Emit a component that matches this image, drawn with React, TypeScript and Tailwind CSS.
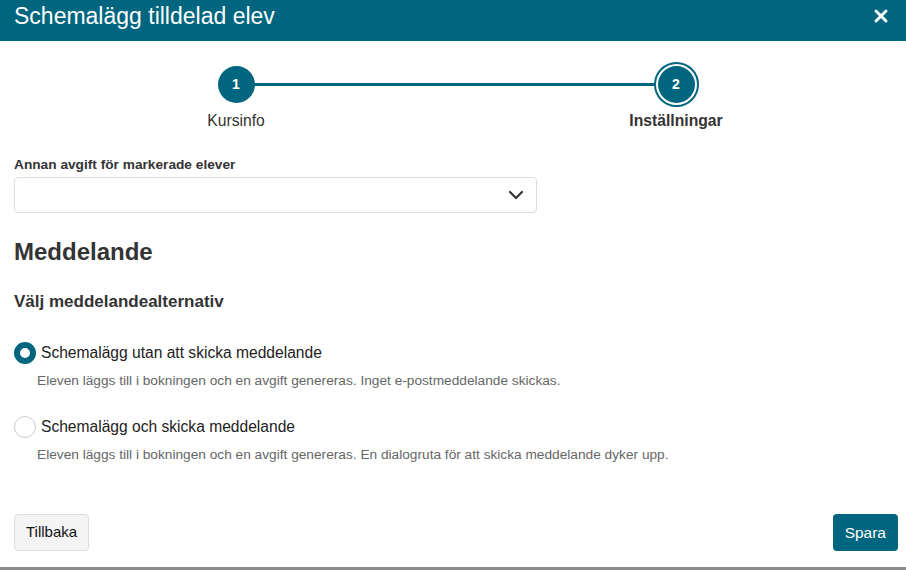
import { ChevronDown, X } from 'lucide-react';

const font = { fontFamily: '"Liberation Sans", Arial, sans-serif' };

function Stepper() {
  return (
    <div className="relative h-[96px] shrink-0">
      {/* linje mellan stegen */}
      <div className="absolute left-[252px] top-[42px] h-[3px] w-[406px] bg-[#00657e]" />
      <div className="absolute left-[196px] top-[25px] flex w-[80px] flex-col items-center">
        <div className="flex h-[37px] w-[37px] items-center justify-center rounded-full bg-[#00657e] text-[14px] font-bold text-white">
          1
        </div>
        <span className="mt-[9px] text-[15.7px] leading-[18px] text-[#333]">Kursinfo</span>
      </div>
      <div className="absolute left-[616px] top-[21px] flex w-[120px] flex-col items-center">
        <div className="flex h-[45px] w-[45px] items-center justify-center rounded-full border-2 border-[#00657e] bg-white">
          <div className="flex h-[37px] w-[37px] items-center justify-center rounded-full bg-[#00657e] text-[14px] font-bold text-white">
            2
          </div>
        </div>
        <span className="mt-[5px] text-[15.7px] font-bold leading-[18px] text-[#333]">Inställningar</span>
      </div>
    </div>
  );
}

function Radio({ checked, label, hint }: { checked: boolean; label: string; hint: string }) {
  return (
    <div className="flex flex-col">
      <div className="flex items-center gap-[5px]">
        <span
          className={`h-[22px] w-[22px] rounded-full bg-white ${
            checked ? 'border-[6px] border-[#00657e]' : 'border border-[#ccc]'
          }`}
        />
        <span className="text-[15.6px] leading-[22px] text-[#222]">{label}</span>
      </div>
      <p className="ml-[23px] mt-[9px] text-[13.7px] leading-[16px] text-[#666]">{hint}</p>
    </div>
  );
}

export default function App() {
  return (
    <div className="h-[570px] w-[906px] overflow-hidden bg-white" style={font}>
      <div className="flex h-[567px] flex-col">
        {/* Header */}
        <div className="flex h-[41px] shrink-0 items-start justify-between bg-[#00657e] pl-[14px] pr-[15px] pt-[5px]">
          <h1 className="text-[23px] leading-[23px] text-white">Schemalägg tilldelad elev</h1>
          <X className="mt-[1px] h-[20px] w-[20px] text-white" strokeWidth={3.5} />
        </div>

        <Stepper />

        <div className="flex flex-1 flex-col px-[14px]">
          <label className="mt-[20px] text-[13.7px] font-bold leading-[16px] text-[#333]">
            Annan avgift för markerade elever
          </label>
          <div className="mt-[4px] flex h-[36px] w-[523px] items-center justify-end rounded-[4px] border border-[#ddd] pr-[8px]">
            <ChevronDown className="h-[24px] w-[24px] text-[#333]" strokeWidth={2.2} />
          </div>

          <h2 className="mt-[25px] text-[24px] font-bold leading-[28px] text-[#333]">Meddelande</h2>
          <h3 className="mt-[26px] text-[17px] font-bold leading-[20px] text-[#333]">Välj meddelandealternativ</h3>

          <div className="mt-[30px] flex flex-col gap-[27px]">
            <Radio
              checked
              label="Schemalägg utan att skicka meddelande"
              hint="Eleven läggs till i bokningen och en avgift genereras. Inget e-postmeddelande skickas."
            />
            <Radio
              checked={false}
              label="Schemalägg och skicka meddelande"
              hint="Eleven läggs till i bokningen och en avgift genereras. En dialogruta för att skicka meddelande dyker upp."
            />
          </div>

          <div className="mt-auto mb-[16px] flex items-center justify-between">
            <button className="h-[37px] rounded-[4px] border border-[#ddd] bg-[#f4f4f4] px-[11px] text-[15px] text-[#111]">
              Tillbaka
            </button>
            <button className="mr-[-6px] h-[37px] rounded-[4px] bg-[#00657e] px-[12px] text-[15.5px] text-white">
              Spara
            </button>
          </div>
        </div>
      </div>
      <div className="h-[3px] bg-[#8a8a8a]" />
    </div>
  );
}
